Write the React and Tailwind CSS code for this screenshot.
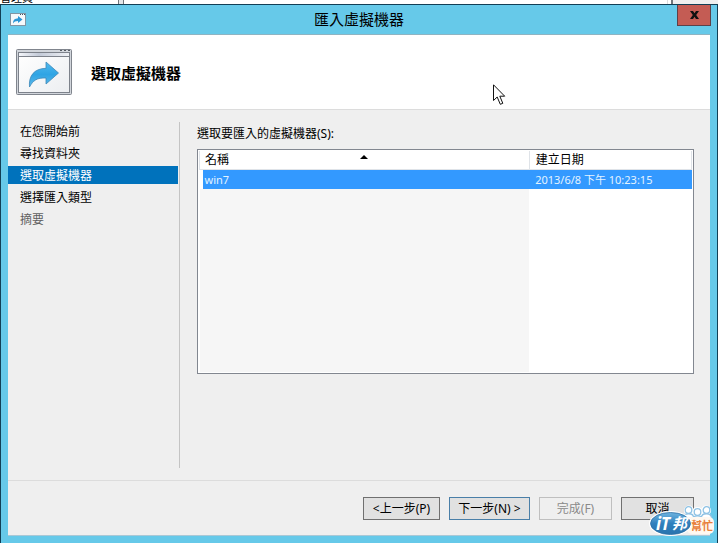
import React, { useState } from 'react';
import clsx from 'clsx';

const steps = [
  { id: 'before', label: '在您開始前' },
  { id: 'folder', label: '尋找資料夾' },
  { id: 'select', label: '選取虛擬機器' },
  { id: 'type', label: '選擇匯入類型' },
  { id: 'summary', label: '摘要', disabled: true },
];

const machines = [
  { name: 'win7', created: '2013/6/8 下午 10:23:15' },
];

const ImportIcon = ({ className }) => (
  <svg viewBox="0 0 57 47" className={className} aria-hidden="true">
    <defs>
      <linearGradient id="pane" x1="0" y1="0" x2="1" y2="1">
        <stop offset="0" stopColor="#ffffff" />
        <stop offset="1" stopColor="#eceef1" />
      </linearGradient>
      <linearGradient id="caption" x1="0" y1="0" x2="1" y2="0">
        <stop offset="0" stopColor="#f4f6fa" />
        <stop offset="0.4" stopColor="#c3cad8" />
        <stop offset="1" stopColor="#eef0f4" />
      </linearGradient>
      <linearGradient id="arrow" x1="0" y1="0" x2="0" y2="1">
        <stop offset="0" stopColor="#4fb9ee" />
        <stop offset="0.5" stopColor="#2fa4e4" />
        <stop offset="1" stopColor="#5cb8ea" />
      </linearGradient>
    </defs>
    <rect x="0.5" y="0.5" width="55" height="45" rx="1" fill="#d2d6dc" stroke="#80858d" />
    <path d="M44 1.5h2M48 1.5h2M52 1.5h2" stroke="#565b63" strokeWidth="1" />
    <rect x="2.5" y="3.5" width="51" height="40" fill="url(#pane)" stroke="#7d828b" />
    <rect x="3" y="4" width="50" height="3.500" fill="url(#caption)" />
    <path d="M3 7.500h50" stroke="#7d828b" />
    <path
      d="M13.500 38C12.500 27 18 19.500 30 19.300V13L42.500 24 30 35V29C21 28.500 17 31.500 13.500 38Z"
      fill="url(#arrow)"
      stroke="#3d88b8"
      strokeWidth="0.8"
      strokeLinejoin="round"
    />
  </svg>
);

const SmallImportIcon = () => (
  <svg viewBox="0 0 16 13" className="h-[13px] w-4" aria-hidden="true">
    <rect x="0.5" y="0.5" width="15" height="12" fill="#f6f9fb" stroke="#8295a3" />
    <path d="M10 1.500h1M12 1.500h1M14 1.500h1" stroke="#46535e" />
    <path d="M3 10.500C3 7 5 5.500 8 5.300V3L12.500 6.500 8 10V8C5.500 8 4.300 8.700 3 10.500Z" fill="#2c97d6" />
  </svg>
);

const Cursor = () => (
  <svg
    viewBox="0 0 13 22"
    className="pointer-events-none absolute left-[493px] top-[84px] h-[22px] w-[13px]"
    aria-hidden="true"
  >
    <path
      d="M0.500 0.800V16.500L4.200 13 7.300 20.300 9.800 19.300 6.800 12.200H11.700Z"
      fill="#ffffff"
      stroke="#111111"
      strokeWidth="1"
    />
  </svg>
);

const SiteBadge = () => (
  <svg
    viewBox="0 0 66 32"
    className="pointer-events-none absolute bottom-[6px] right-[3px] h-8 w-[66px]"
    role="img"
    aria-label="iT邦幫忙"
  >
    <defs>
      <linearGradient id="badge" x1="0" y1="0" x2="0" y2="1">
        <stop offset="0" stopColor="#6fb4e0" />
        <stop offset="0.5" stopColor="#2f80bd" />
        <stop offset="1" stopColor="#2a74ae" />
      </linearGradient>
    </defs>
    {/* people */}
    <g stroke="#ffffff" strokeWidth="3" fill="#ffffff">
      <circle cx="40" cy="5.500" r="3.600" />
      <circle cx="48.500" cy="7" r="3.600" />
      <circle cx="57" cy="5.500" r="3.600" />
      <path d="M36 11h24" />
    </g>
    <g stroke="#8ec2e4" strokeWidth="1.300" fill="#ffffff">
      <path d="M34.500 13C34.500 7.500 44 7.500 44.500 12M52.500 12C53 7.500 62.500 7.500 62.500 13" />
      <circle cx="39.500" cy="5" r="3.300" />
      <circle cx="57.500" cy="5" r="3.300" />
      <path d="M43.500 15C43.500 9.500 53.500 9.500 53.500 15" />
      <circle cx="48.500" cy="7" r="3.300" />
    </g>
    <rect x="38" y="12" width="27" height="17" rx="5" fill="#fff8f0" />
    <ellipse cx="21.500" cy="18.500" rx="21.500" ry="12.500" fill="#ffffff" />
    <ellipse cx="21.500" cy="18.500" rx="20" ry="11" fill="url(#badge)" stroke="#2b6ea4" strokeWidth="0.800" />
    <text x="7" y="25" fill="#ffffff" fontSize="17" fontWeight="700" fontStyle="italic" fontFamily="'Open Sans', sans-serif">iT</text>
    <text x="23" y="24" fill="#ffffff" fontSize="15" fontWeight="700" fontStyle="italic" fontFamily="'Noto Sans CJK TC', sans-serif">邦</text>
    <text x="42" y="25" fill="#e8803a" fontSize="11" fontWeight="700" fontFamily="'Noto Sans CJK TC', sans-serif">幫忙</text>
  </svg>
);

const WizardButton = ({ children, className, ...props }) => (
  <button
    type="button"
    className={clsx(
      'flex h-[23px] items-center justify-center whitespace-pre border text-xs',
      props.disabled ? 'border-[#bfbfbf] bg-[#efefef] text-[#8a8a8a]' : 'bg-[#e1e1e1] text-black',
      className
    )}
    {...props}
  >
    {children}
  </button>
);

const App = () => {
  const [selected, setSelected] = useState(0);
  const [activeStep, setActiveStep] = useState('select');

  return (
    <div className="relative flex min-h-screen flex-col overflow-hidden bg-white font-['Noto_Sans','Noto_Sans_CJK_TC',sans-serif] text-black">

      {/* WINDOW BEHIND */}
      <div className="flex h-1 overflow-hidden bg-white">
        <div className="flex w-[118px] items-end overflow-hidden text-[11px] leading-3">管理員</div>
        <div className="w-[6px] border-x border-[#70757a] bg-[#e4e6e8]" />
        <div className="flex-1" />
        <div className="w-[6px] border-l border-r-2 border-l-[#dddddd] border-r-[#70757a]" />
        <div className="w-[45px] bg-[#efefef]" />
      </div>

      {/* DIALOG */}
      <div className="flex flex-1 flex-col border-x border-t border-[#123f55] bg-[#66c9e9] px-[7px] pb-[7px]">

        <div className="flex h-[29px] items-start">
          <div className="flex w-[33px] pl-[2px] pt-2">
            <SmallImportIcon />
          </div>
          <h1 className="flex-1 text-center text-[15px] leading-[29px]">匯入虛擬機器</h1>
          <button
            type="button"
            aria-label="關閉"
            className="-mr-px flex h-[21px] w-[34px] items-center justify-center border border-t-0 border-[#5d4048] bg-[#c45c54]"
          >
            <svg viewBox="0 0 9 8" className="h-2 w-[9px]" aria-hidden="true">
              <path d="M0 0H3L4.500 2.300 6 0H9L6.200 4 9 8H6L4.500 5.700 3 8H0L2.800 4Z" fill="#111111" />
            </svg>
          </button>
        </div>

        <div className="flex flex-1 flex-col border-b border-[#a9c8d6] bg-[#efefef]">

          {/* HEADER */}
          <header className="flex h-[76px] items-center gap-[18px] border-b border-t border-b-[#dcdcdc] border-t-[#8fb4c2] bg-white pl-2">
            <ImportIcon className="h-[47px] w-[57px]" />
            <h2 className="pt-[2px] text-[15px] font-bold">選取虛擬機器</h2>
          </header>

          <div className="flex flex-1 py-3">

            {/* STEPS */}
            <nav className="flex w-[172px] flex-col gap-1 border-r border-[#c4c4c4] pr-px text-xs">
              {steps.map((step) => (
                <a
                  key={step.id}
                  href={`#${step.id}`}
                  aria-disabled={step.disabled}
                  onClick={() => !step.disabled && setActiveStep(step.id)}
                  className={clsx(
                    'pl-3 pt-[2px] leading-4',
                    activeStep === step.id && 'bg-[#0072bc] text-white',
                    step.disabled && 'text-[#5f5f5f]'
                  )}
                >
                  {step.label}
                </a>
              ))}
            </nav>

            {/* MACHINE LIST */}
            <main className="flex flex-1 flex-col pl-[17px] pr-4">
              <p id="machines-label" className="pt-[2px] text-xs leading-5">選取要匯入的虛擬機器(S):</p>

              <div className="mt-[5px] border border-[#828790] bg-white p-px">
                <table aria-labelledby="machines-label" className="w-full table-fixed text-left text-xs">
                  <thead>
                    <tr className="h-[18px]">
                      <th className="relative w-[67%] border border-t-0 border-[#dfe3e8] p-0 pl-[5px] pt-px font-normal leading-4">
                        <button type="button">名稱</button>
                        <svg viewBox="0 0 8 4" className="absolute left-1/2 top-1 -ml-1 h-1 w-2" aria-hidden="true">
                          <path d="M4 0 8 4H0Z" fill="#000000" />
                        </svg>
                      </th>
                      <th className="border-b border-r border-[#dfe3e8] p-0 pl-[6px] pt-px font-normal leading-4">
                        <button type="button">建立日期</button>
                      </th>
                    </tr>
                  </thead>
                  <tbody>
                    {machines.map((vm, index) => (
                      <tr
                        key={vm.name}
                        onClick={() => setSelected(index)}
                        className={clsx('text-[11px] leading-[19px]', selected === index && 'text-[#e4f3ff]')}
                      >
                        <td className="p-0 pl-[3px]">
                          <div className={clsx('pl-[2px]', selected === index && 'bg-[#3399ff]')}>{vm.name}</div>
                        </td>
                        <td className={clsx('p-0 pl-[6px]', selected === index && 'bg-[#3399ff]')}>{vm.created}</td>
                      </tr>
                    ))}
                    <tr className="h-[183px]">
                      <td className="bg-[#f6f6f6] p-0" />
                      <td className="p-0" />
                    </tr>
                  </tbody>
                </table>
              </div>
            </main>
          </div>

          {/* FOOTER */}
          <footer className="flex justify-end gap-[9px] border-t border-[#dcdcdc] pb-[15px] pr-4 pt-4">
            <WizardButton className="w-[77px] border-[#707070]">{'<上一步(P)'}</WizardButton>
            <WizardButton className="w-[81px] border-[#4a7fa8]">{'下一步(N) >'}</WizardButton>
            <WizardButton className="w-[73px]" disabled>完成(F)</WizardButton>
            <WizardButton className="w-[73px] border-[#707070]">取消</WizardButton>
          </footer>
        </div>
      </div>

      <SiteBadge />
      <Cursor />
    </div>
  );
};

export default App;
